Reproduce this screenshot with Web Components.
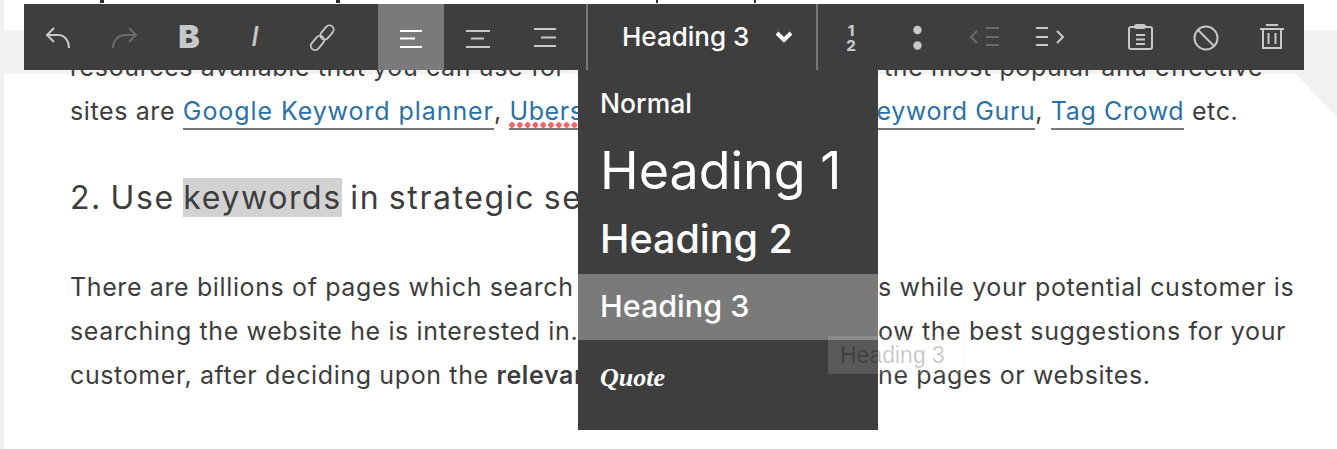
<!DOCTYPE html>
<html>
<head>
<meta charset="utf-8">
<title>Editor</title>
<style>
  html, body { margin: 0; padding: 0; background: #f1f1f1; }
  body { font-family: Inter, "Liberation Sans", sans-serif; overflow: hidden; }
  b { font-weight: 600; }
  .sel { background: #d2d2d2; }
</style>
</head>
<body>
<editor-page>
  <doc-article>
    <text-line>resources available that you can use for<span slot="right" style="margin-left:6px">the most popular and effective</span></text-line>
    <text-line>sites are <doc-link style="letter-spacing:0.92px">Google Keyword planner</doc-link>, <doc-link misspelt>Ubersuggest</doc-link><span slot="right" style="margin-left:-18px"><doc-link>Keyword Guru</doc-link>, <doc-link>Tag Crowd</doc-link> etc.</span></text-line>
    <doc-heading>2. Use <span class="sel">keywords</span> in strategic sections</doc-heading>
    <doc-para>
      <text-line>There are billions of pages which search<span slot="right">s while your potential customer is</span></text-line>
      <text-line>searching the website he is interested in.<span slot="right">ow the best suggestions for your</span></text-line>
      <text-line>customer, after deciding upon the <b>relevant</b><span slot="right">ne pages or websites.</span></text-line>
    </doc-para>
  </doc-article>
  <editor-toolbar></editor-toolbar>
  <drag-ghost>Heading 3</drag-ghost>
</editor-page>

<script>
// page background: white sheet, grey band behind the toolbar, corner fold on the right
class EditorPage extends HTMLElement {
  constructor() {
    super();
    this.attachShadow({ mode: 'open' });
    this.shadowRoot.innerHTML = `
      <style>
        :host {
          display: block;
          position: relative;
          width: 1333px;
          height: 449px;
          margin-left: 4px;
          overflow: hidden;
          background:
            linear-gradient(#f1f1f1, #f1f1f1) 0 30px / 100% 44px no-repeat,
            linear-gradient(to top right, #fff 50%, #f1f1f1 50%) right 0 top 74px / 41px 44px no-repeat,
            #fff;
        }
      </style>
      <slot></slot>`;
  }
}

class DocArticle extends HTMLElement {
  constructor() {
    super();
    this.attachShadow({ mode: 'open' });
    this.shadowRoot.innerHTML = `
      <style>
        :host {
          display: block;
          padding: 0 0 0 66px;
          font-size: 25px;
          letter-spacing: 0.62px;
          color: #3d3d3d;
        }
        .stubs { display: flex; height: 3px; margin-bottom: 42px; }
        .stubs i { display: block; background: #2e2e2e; height: 3px; }
      </style>
      <div class="stubs">
        <i style="width:4px;margin-left:30px"></i>
        <i style="width:4px;margin-left:232px"></i>
        <i style="width:2px;margin-left:316px"></i>
        <i style="width:2px;margin-left:96px"></i>
      </div>
      <slot></slot>`;
  }
}

// one text line: the left part runs under the dropdown, the right part starts past it
class TextLine extends HTMLElement {
  constructor() {
    super();
    this.attachShadow({ mode: 'open' });
    this.shadowRoot.innerHTML = `
      <style>
        :host {
          display: grid;
          grid-template-columns: 808px 1fr;
          height: 44px;
          line-height: 44px;
          white-space: nowrap;
        }
        .l, .r { display: block; }
      </style>
      <span class="l"><slot></slot></span>
      <span class="r"><slot name="right"></slot></span>`;
  }
}

class DocHeading extends HTMLElement {
  constructor() {
    super();
    this.attachShadow({ mode: 'open' });
    this.shadowRoot.innerHTML = `
      <style>
        :host {
          display: block;
          margin-top: 43px;
          height: 44px;
          line-height: 44px;
          font-size: 32px;
          letter-spacing: 1.6px;
          word-spacing: -2px;
          white-space: nowrap;
        }
      </style>
      <slot></slot>`;
  }
}

class DocPara extends HTMLElement {
  constructor() {
    super();
    this.attachShadow({ mode: 'open' });
    this.shadowRoot.innerHTML = `
      <style>:host { display: block; margin-top: 45px; }</style>
      <slot></slot>`;
  }
}

class DocLink extends HTMLElement {
  constructor() {
    super();
    this.attachShadow({ mode: 'open' });
    this.shadowRoot.innerHTML = `
      <style>
        :host {
          display: inline-block;
          position: relative;
          color: #2a72a5;
          line-height: 33px;
          border-bottom: 2px solid #777;
        }
        :host([misspelt])::after {
          content: '';
          position: absolute;
          left: 0;
          right: 0;
          bottom: 0;
          height: 6px;
          background: radial-gradient(circle at 3px 3px, #ee6a6a 2.6px, transparent 3px) 0 0 / 7.8px 6px repeat-x;
        }
      </style>
      <slot></slot>`;
  }
}

class ToolBtn extends HTMLElement {
  constructor() {
    super();
    this.attachShadow({ mode: 'open' });
    this.shadowRoot.innerHTML = `
      <style>
        :host {
          display: flex;
          flex: 0 0 66px;
          height: 66px;
          align-items: center;
          justify-content: center;
          color: #c8c8c8;
        }
        :host([active]) { background: #7a7a7a; color: #fff; }
        :host([off]) { color: #6c6c6c; }
      </style>
      <slot></slot>`;
  }
}

class EditorToolbar extends HTMLElement {
  constructor() {
    super();
    this.attachShadow({ mode: 'open' });
    this.shadowRoot.innerHTML = `
      <style>
        :host {
          display: flex;
          position: absolute;
          left: 20px;
          top: 4px;
          width: 1280px;
          height: 66px;
          background: #3e3e3e;
          color: #c8c8c8;
        }
        svg { display: block; width: 66px; height: 66px; fill: none; stroke: currentColor; stroke-width: 2; }
        .glyph-b { font: 900 32px/66px Inter, sans-serif; }
        .glyph-i { font: italic 500 27px/66px Inter, sans-serif; }
        .frac { font: 800 15px/15px Inter, sans-serif; text-align: center; padding-top: 2px; }
        .frac span { display: block; }
        .gap { flex: 0 0 24px; }
        .sep { flex: 0 0 2px; background: #777; }
        .style-pick {
          flex: 0 0 228px;
          display: flex;
          align-items: center;
          padding-left: 34px;
          box-sizing: border-box;
          color: #fff;
          font: 500 26px/66px Inter, sans-serif;
          gap: 25px;
        }
        .style-pick svg { width: 20px; height: 14px; stroke-width: 4; }
      </style>
      <tool-btn>
        <svg viewBox="24 4 66 66"><path d="M54 28 47 35 54 42M47 35H58C65 35 69 41 69 48" stroke-width="2"/></svg>
      </tool-btn>
      <tool-btn off>
        <svg viewBox="90 4 66 66"><path d="M129 28 136 35 129 42M136 35H125C118 35 113 41 113 48"/></svg>
      </tool-btn>
      <tool-btn><span class="glyph-b">B</span></tool-btn>
      <tool-btn><span class="glyph-i">I</span></tool-btn>
      <tool-btn>
        <svg viewBox="288 4 66 66" style="stroke-width:1.8">
          <rect x="322.750" y="24.500" width="8.500" height="16" rx="4.250" transform="rotate(40 327 32.500)"/>
          <rect x="313.250" y="35" width="8.500" height="16" rx="4.250" transform="rotate(40 317.500 43)"/>
        </svg>
      </tool-btn>
      <div class="gap"></div>
      <tool-btn active>
        <svg viewBox="378 4 66 66"><path d="M400 31H422M400 38.500H415M400 47H422"/></svg>
      </tool-btn>
      <tool-btn>
        <svg viewBox="444 4 66 66"><path d="M466 31H490M471 38.500H484M466 47H490"/></svg>
      </tool-btn>
      <tool-btn>
        <svg viewBox="510 4 66 66"><path d="M534 29H556M541 37.500H556M534 46H556"/></svg>
      </tool-btn>
      <div style="flex:0 0 10px"></div>
      <div class="sep"></div>
      <div class="style-pick">
        <span>Heading 3</span>
        <svg viewBox="0 0 20 14"><path d="M3 3 10 10 17 3"/></svg>
      </div>
      <div class="sep"></div>
      <tool-btn><div class="frac"><span>1</span><span>2</span></div></tool-btn>
      <tool-btn>
        <svg viewBox="884 4 66 66" style="fill:currentColor;stroke:none"><circle cx="917.500" cy="30" r="4.200"/><circle cx="917.500" cy="45.500" r="4.200"/></svg>
      </tool-btn>
      <tool-btn off>
        <svg viewBox="950 4 66 66"><path d="M977 31 971 37 977 43M986 28H999M986 37H999M986 45H999"/></svg>
      </tool-btn>
      <tool-btn>
        <svg viewBox="1016 4 66 66"><path d="M1036 28H1048M1036 37H1048M1036 45H1048M1057 31 1063 37 1057 43"/></svg>
      </tool-btn>
      <div class="gap"></div>
      <tool-btn>
        <svg viewBox="1106 4 66 66">
          <rect x="1129" y="27" width="23" height="22" rx="2"/>
          <path d="M1136 35H1145M1136 39.500H1145M1136 44H1145"/>
          <rect x="1134" y="24" width="12" height="5" rx="2.500" fill="currentColor" stroke="none"/>
        </svg>
      </tool-btn>
      <tool-btn>
        <svg viewBox="1172 4 66 66"><circle cx="1206" cy="38" r="11.500"/><path d="M1198 30 1214 46"/></svg>
      </tool-btn>
      <tool-btn>
        <svg viewBox="1238 4 66 66"><path d="M1266 25H1278M1260 29H1284M1263 29V48H1281V29M1268.500 33V44M1275.500 33V44"/></svg>
      </tool-btn>
      <format-menu></format-menu>`;
  }
}

class FormatMenu extends HTMLElement {
  constructor() {
    super();
    this.attachShadow({ mode: 'open' });
    this.shadowRoot.innerHTML = `
      <style>
        :host {
          display: block;
          position: absolute;
          left: 554px;
          top: 66px;
          width: 300px;
          height: 360px;
          background: #3e3e3e;
          color: #fff;
          font-family: Inter, sans-serif;
          font-weight: 500;
        }
        div { display: flex; align-items: center; padding-left: 22px; white-space: nowrap; box-sizing: border-box; }
        .n { height: 66px; font-size: 26.500px; }
        .h1 { height: 68px; font-size: 52px; font-weight: 400; }
        .h2 { height: 70px; font-size: 39.500px; }
        .h3 { height: 66px; font-size: 30.500px; background: #7a7a7a; padding-bottom: 4px; }
        .q { height: 76px; font: italic 700 26px "Liberation Serif", serif; }
      </style>
      <div class="n">Normal</div>
      <div class="h1">Heading 1</div>
      <div class="h2">Heading 2</div>
      <div class="h3">Heading 3</div>
      <div class="q">Quote</div>`;
  }
}

// translucent drag image left by the browser while an item is being dragged
class DragGhost extends HTMLElement {
  constructor() {
    super();
    this.attachShadow({ mode: 'open' });
    this.shadowRoot.innerHTML = `
      <style>
        :host {
          display: block;
          position: absolute;
          left: 824px;
          top: 336px;
          width: 135px;
          height: 38px;
          box-sizing: border-box;
          padding-left: 12px;
          background: rgba(255, 255, 255, 0.14);
          outline: 1px solid rgba(0, 0, 0, 0.03);
          font: 23px/38px "Liberation Sans", sans-serif;
          white-space: nowrap;
        }
        span {
          background: linear-gradient(90deg, #404040 38px, #c9c9c9 38px);
          -webkit-background-clip: text;
          background-clip: text;
          color: transparent;
        }
      </style>
      <span><slot></slot></span>`;
  }
}

customElements.define('editor-page', EditorPage);
customElements.define('doc-article', DocArticle);
customElements.define('text-line', TextLine);
customElements.define('doc-heading', DocHeading);
customElements.define('doc-para', DocPara);
customElements.define('doc-link', DocLink);
customElements.define('tool-btn', ToolBtn);
customElements.define('editor-toolbar', EditorToolbar);
customElements.define('format-menu', FormatMenu);
customElements.define('drag-ghost', DragGhost);
</script>
</body>
</html>
